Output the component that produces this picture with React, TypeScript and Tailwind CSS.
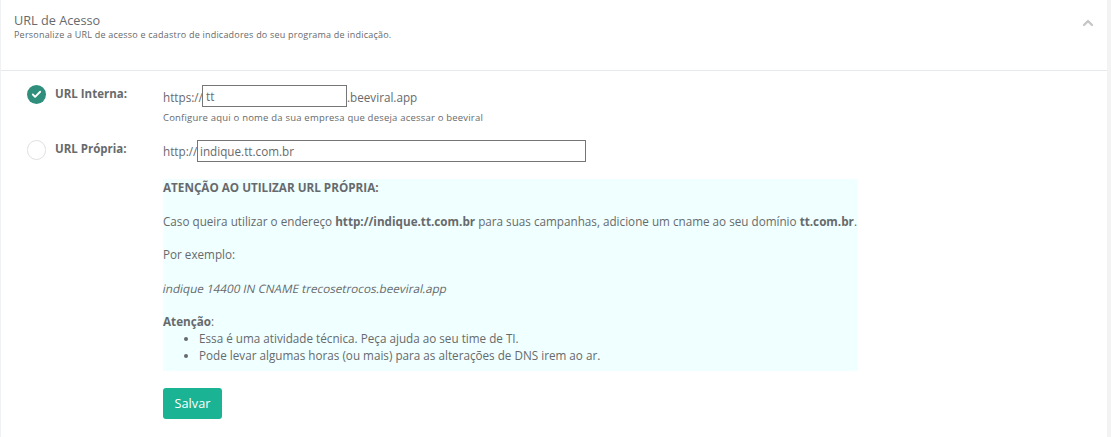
import { ChevronUp, Check } from 'lucide-react';

export default function App() {
  return (
    <div className="h-[437px] w-[1111px] overflow-hidden bg-[#f3f3f3] pr-[4px] font-['Open_Sans',sans-serif] text-[11.7px] text-[#676a6c]">
      <div className="h-full border-l border-[#f0f1f2] bg-white">
        <div className="flex h-[71px] items-start justify-between border-b border-[#e7eaec] pl-[13px] pr-[11px] pt-[11px]">
          <div>
            <h2 className="text-[12.7px] leading-[18px]">URL de Acesso</h2>
            <p className="-mt-px text-[9px] leading-[13px] tracking-[0.21px]">
              Personalize a URL de acesso e cadastro de indicadores do seu programa de indicação.
            </p>
          </div>
          <ChevronUp className="mt-[4px] h-[16px] w-[16px] text-[#c4c6c8]" strokeWidth={3.5} />
        </div>

        <div className="flex pl-[26px] pt-[14px]">
          <div className="flex w-[136px] shrink-0 flex-col">
            <div className="flex h-[41px] items-start gap-[9px]">
              <span className="flex h-[19px] w-[19px] items-center justify-center rounded-full bg-[#2f8f7c]">
                <Check className="h-[11px] w-[11px] text-white" strokeWidth={4} />
              </span>
              <span className="text-[11.5px] font-bold leading-[17px]">URL Interna:</span>
            </div>
            <div className="mt-[14px] flex items-start gap-[9px]">
              <span className="h-[20px] w-[19px] rounded-full border border-[#e0e0e0] bg-white" />
              <span className="text-[11.5px] font-bold leading-[17px]">URL Própria:</span>
            </div>
          </div>

          <div className="w-[695px]">
            <div className="flex h-[22px] items-center">
              <span className="w-[39px] pt-[3px]">https://</span>
              <input
                readOnly
                value="tt"
                className="h-[22px] w-[145px] border border-[#767676] bg-white px-[3px] text-[11.7px] outline-none"
              />
              <span className="pt-[3px]">.beeviral.app</span>
            </div>
            <p className="mt-[4px] text-[9.5px] leading-[13px] tracking-[0.2px]">
              Configure aqui o nome da sua empresa que deseja acessar o beeviral
            </p>
            <div className="mt-[16px] flex h-[22px] items-center">
              <span className="w-[34px] pt-[2px]">http://</span>
              <input
                readOnly
                value="indique.tt.com.br"
                className="h-[22px] w-[389px] border border-[#767676] bg-white px-[2px] text-[11.7px] outline-none"
              />
            </div>

            <div className="mt-[17px] whitespace-nowrap bg-[#f0ffff] pb-[7px] leading-[16.8px]">
              <p className="font-bold">ATENÇÃO AO UTILIZAR URL PRÓPRIA:</p>
              <p className="mt-[16.8px]">
                Caso queira utilizar o endereço <b>http://indique.tt.com.br</b> para suas campanhas,
                adicione um cname ao seu domínio <b>tt.com.br</b>.
              </p>
              <p className="mt-[16.8px]">Por exemplo:</p>
              <p className="mt-[16.8px]">
                <span className="inline-block -skew-x-12">
                  indique 14400 IN CNAME trecosetrocos.beeviral.app
                </span>
              </p>
              <p className="mt-[16.8px]">
                <b>Atenção</b>:
              </p>
              <ul className="list-disc pl-[36px]">
                <li>Essa é uma atividade técnica. Peça ajuda ao seu time de TI.</li>
                <li>Pode levar algumas horas (ou mais) para as alterações de DNS irem ao ar.</li>
              </ul>
            </div>

            <button
              type="button"
              className="mt-[17px] h-[31px] w-[59px] rounded-[3px] bg-[#1ab394] text-[12.7px] text-white"
            >
              Salvar
            </button>
          </div>
        </div>
      </div>
    </div>
  );
}
